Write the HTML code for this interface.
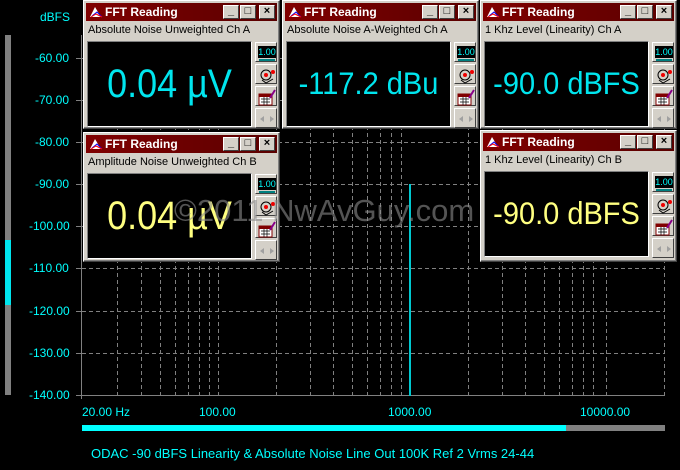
<!DOCTYPE html>
<html><head><meta charset="utf-8"><style>
*{margin:0;padding:0;box-sizing:border-box}
body{width:680px;height:470px;background:#000;position:relative;overflow:hidden;font-family:"Liberation Sans",sans-serif}
.lbl{position:absolute;color:#00ffff;font-size:12px}
.win{position:absolute;background:#d4d0c8;border:1px solid;border-color:#fff #404040 #404040 #fff;box-shadow:inset -1px -1px #808080}
.tb{position:absolute;left:2px;right:2px;top:2px;height:18px;background:linear-gradient(90deg,#800000,#5a0000);color:#fff;font-weight:bold;font-size:12px;line-height:18px;padding-left:19px}
.tb .ic{position:absolute;left:3px;top:3px}
.btn{position:absolute;top:2px;width:16px;height:14px;background:#d4d0c8;border:1px solid;border-color:#fff #404040 #404040 #fff;color:#000;font-size:11px;line-height:11px;text-align:center;font-weight:bold}
.cap{position:absolute;left:4px;top:23px;font-size:11px;color:#000}
.disp{position:absolute;left:3px;top:40px;width:165px;height:86px;background:#000;border:1px solid;border-color:#808080 #fff #fff #808080;font-size:36px;text-align:center;line-height:84px;white-space:nowrap}
.disp span{display:inline-block;transform:scaleY(1.1)}
.sb{position:absolute;left:171px;width:22px;height:20px;background:#d4d0c8;border:1px solid;border-color:#fff #404040 #404040 #fff}
.sb svg{position:absolute;left:1px;top:1px}
</style></head><body>
<svg width="680" height="470" style="position:absolute;left:0;top:0">
<rect x="5" y="35" width="6" height="360" fill="#808080"/>
<rect x="5" y="240" width="6" height="65" fill="#00e5ee"/>
<g stroke="#808080" stroke-width="1" stroke-dasharray="4,3">
<line x1="82" y1="268.5" x2="665" y2="268.5"/><line x1="82" y1="311.5" x2="665" y2="311.5"/><line x1="82" y1="353.5" x2="665" y2="353.5"/>
<line x1="82" y1="142.5" x2="665" y2="142.5"/><line x1="82" y1="184.5" x2="665" y2="184.5"/><line x1="82" y1="226.5" x2="665" y2="226.5"/>
<line x1="82" y1="58.5" x2="665" y2="58.5"/><line x1="82" y1="100.5" x2="665" y2="100.5"/>
<line x1="117.5" y1="35" x2="117.5" y2="395"/><line x1="141.5" y1="35" x2="141.5" y2="395"/><line x1="160.5" y1="35" x2="160.5" y2="395"/><line x1="175.5" y1="35" x2="175.5" y2="395"/><line x1="188.5" y1="35" x2="188.5" y2="395"/><line x1="199.5" y1="35" x2="199.5" y2="395"/><line x1="209.5" y1="35" x2="209.5" y2="395"/>
<line x1="218.5" y1="35" x2="218.5" y2="395"/><line x1="276.5" y1="35" x2="276.5" y2="395"/><line x1="310.5" y1="35" x2="310.5" y2="395"/><line x1="333.5" y1="35" x2="333.5" y2="395"/><line x1="352.5" y1="35" x2="352.5" y2="395"/><line x1="367.5" y1="35" x2="367.5" y2="395"/><line x1="380.5" y1="35" x2="380.5" y2="395"/><line x1="391.5" y1="35" x2="391.5" y2="395"/><line x1="401.5" y1="35" x2="401.5" y2="395"/>
<line x1="468.5" y1="35" x2="468.5" y2="395"/><line x1="502.5" y1="35" x2="502.5" y2="395"/><line x1="525.5" y1="35" x2="525.5" y2="395"/><line x1="544.5" y1="35" x2="544.5" y2="395"/><line x1="559.5" y1="35" x2="559.5" y2="395"/><line x1="572.5" y1="35" x2="572.5" y2="395"/><line x1="583.5" y1="35" x2="583.5" y2="395"/><line x1="593.5" y1="35" x2="593.5" y2="395"/><line x1="606.5" y1="35" x2="606.5" y2="395"/><line x1="664.5" y1="35" x2="664.5" y2="395"/>
</g>
<line x1="82" y1="395.5" x2="665" y2="395.5" stroke="#808080"/>
<line x1="81.5" y1="35" x2="81.5" y2="399" stroke="#808080"/>
<g stroke="#808080"><line x1="76" y1="58.5" x2="82" y2="58.5"/><line x1="76" y1="100.5" x2="82" y2="100.5"/><line x1="76" y1="142.5" x2="82" y2="142.5"/><line x1="76" y1="184.5" x2="82" y2="184.5"/><line x1="76" y1="226.5" x2="82" y2="226.5"/><line x1="76" y1="268.5" x2="82" y2="268.5"/><line x1="76" y1="311.5" x2="82" y2="311.5"/><line x1="76" y1="353.5" x2="82" y2="353.5"/><line x1="76" y1="395.5" x2="82" y2="395.5"/></g>
<rect x="409" y="184" width="2" height="212" fill="#00c8d0"/>
<rect x="82" y="425" width="484" height="6" fill="#00ffff"/>
<rect x="566" y="425" width="99" height="6" fill="#808080"/>
<defs>
<g id="b1"><rect x="1" y="2" width="18" height="12" fill="#000"/><text x="10" y="11" font-size="9" fill="#00ffff" text-anchor="middle" font-family="Liberation Sans">1.00</text><line x1="2" y1="16" x2="18" y2="16" stroke="#008080" stroke-width="2"/></g>
<g id="b2"><circle cx="9" cy="9" r="5" fill="none" stroke="#000"/><circle cx="9" cy="9" r="2" fill="#e00"/><circle cx="16" cy="6" r="2" fill="#e00"/><path d="M5 14 L9 17 L16 13" stroke="#000" fill="none"/></g>
<g id="b3"><rect x="2" y="6" width="13" height="11" fill="#fff" stroke="#800000"/><rect x="2" y="6" width="13" height="3" fill="#800000"/><path d="M4 11h9M4 14h9M7 9v8M10 9v8" stroke="#000" stroke-width="0.7"/><path d="M13 10 L18 2" stroke="#808" stroke-width="2"/></g>
<g id="b4"><path d="M3 9 L7 6 L7 12Z M17 9 L13 6 L13 12Z" fill="#a0a0a0"/></g>
</defs>
</svg>
<div class="lbl" style="left:40px;top:10px">dBFS</div>
<div class="lbl" style="left:35px;top:51px">-60.00</div>
<div class="lbl" style="left:35px;top:93px">-70.00</div>
<div class="lbl" style="left:35px;top:135px">-80.00</div>
<div class="lbl" style="left:35px;top:177px">-90.00</div>
<div class="lbl" style="left:29px;top:219px">-100.00</div>
<div class="lbl" style="left:29px;top:261px">-110.00</div>
<div class="lbl" style="left:29px;top:304px">-120.00</div>
<div class="lbl" style="left:29px;top:346px">-130.00</div>
<div class="lbl" style="left:29px;top:388px">-140.00</div>
<div class="lbl" style="left:82px;top:405px">20.00 Hz</div>
<div class="lbl" style="left:199px;top:405px">100.00</div>
<div class="lbl" style="left:388px;top:405px">1000.00</div>
<div class="lbl" style="left:580px;top:405px">10000.00</div>
<div class="lbl" style="left:91px;top:446px;font-size:13px">ODAC -90 dBFS Linearity &amp; Absolute Noise Line Out 100K Ref 2 Vrms 24-44</div>

<div class="win" style="left:83px;top:0;width:197px;height:129px">
<div class="tb"><svg class="ic" width="14" height="12"><path d="M1 11 L6 1 L12 11 Z" fill="#fff"/><path d="M3 10 L8 6 L13 11" stroke="#00f" fill="none"/><path d="M2 11 L7 8 L13 11" stroke="#f00" fill="none"/></svg>FFT Reading
<div class="btn" style="left:137px">_</div><div class="btn" style="left:154px">□</div><div class="btn" style="left:173px">×</div></div>
<div class="cap">Absolute Noise Unweighted Ch A</div>
<div class="disp" style="color:#00e5ee"><span>0.04 µV</span></div>
<div class="sb" style="top:41px"><svg width="20" height="18"><use href="#b1"/></svg></div><div class="sb" style="top:63px"><svg width="20" height="18"><use href="#b2"/></svg></div><div class="sb" style="top:85px"><svg width="20" height="18"><use href="#b3"/></svg></div><div class="sb" style="top:107px"><svg width="20" height="18"><use href="#b4"/></svg></div>
</div>
<div class="win" style="left:282px;top:0;width:197px;height:129px">
<div class="tb"><svg class="ic" width="14" height="12"><path d="M1 11 L6 1 L12 11 Z" fill="#fff"/><path d="M3 10 L8 6 L13 11" stroke="#00f" fill="none"/><path d="M2 11 L7 8 L13 11" stroke="#f00" fill="none"/></svg>FFT Reading
<div class="btn" style="left:137px">_</div><div class="btn" style="left:154px">□</div><div class="btn" style="left:173px">×</div></div>
<div class="cap">Absolute Noise A-Weighted Ch A</div>
<div class="disp" style="color:#00e5ee;font-size:29px"><span>-117.2 dBu</span></div>
<div class="sb" style="top:41px"><svg width="20" height="18"><use href="#b1"/></svg></div><div class="sb" style="top:63px"><svg width="20" height="18"><use href="#b2"/></svg></div><div class="sb" style="top:85px"><svg width="20" height="18"><use href="#b3"/></svg></div><div class="sb" style="top:107px"><svg width="20" height="18"><use href="#b4"/></svg></div>
</div>
<div class="win" style="left:480px;top:0;width:197px;height:129px">
<div class="tb"><svg class="ic" width="14" height="12"><path d="M1 11 L6 1 L12 11 Z" fill="#fff"/><path d="M3 10 L8 6 L13 11" stroke="#00f" fill="none"/><path d="M2 11 L7 8 L13 11" stroke="#f00" fill="none"/></svg>FFT Reading
<div class="btn" style="left:137px">_</div><div class="btn" style="left:154px">□</div><div class="btn" style="left:173px">×</div></div>
<div class="cap">1 Khz Level (Linearity) Ch A</div>
<div class="disp" style="color:#00e5ee;font-size:29px"><span>-90.0 dBFS</span></div>
<div class="sb" style="top:41px"><svg width="20" height="18"><use href="#b1"/></svg></div><div class="sb" style="top:63px"><svg width="20" height="18"><use href="#b2"/></svg></div><div class="sb" style="top:85px"><svg width="20" height="18"><use href="#b3"/></svg></div><div class="sb" style="top:107px"><svg width="20" height="18"><use href="#b4"/></svg></div>
</div>
<div class="win" style="left:83px;top:132px;width:197px;height:130px">
<div class="tb"><svg class="ic" width="14" height="12"><path d="M1 11 L6 1 L12 11 Z" fill="#fff"/><path d="M3 10 L8 6 L13 11" stroke="#00f" fill="none"/><path d="M2 11 L7 8 L13 11" stroke="#f00" fill="none"/></svg>FFT Reading
<div class="btn" style="left:137px">_</div><div class="btn" style="left:154px">□</div><div class="btn" style="left:173px">×</div></div>
<div class="cap">Amplitude Noise Unweighted Ch B</div>
<div class="disp" style="color:#ffff80"><span>0.04 µV</span></div>
<div class="sb" style="top:41px"><svg width="20" height="18"><use href="#b1"/></svg></div><div class="sb" style="top:63px"><svg width="20" height="18"><use href="#b2"/></svg></div><div class="sb" style="top:85px"><svg width="20" height="18"><use href="#b3"/></svg></div><div class="sb" style="top:107px"><svg width="20" height="18"><use href="#b4"/></svg></div>
</div>
<div class="win" style="left:480px;top:130px;width:197px;height:132px">
<div class="tb"><svg class="ic" width="14" height="12"><path d="M1 11 L6 1 L12 11 Z" fill="#fff"/><path d="M3 10 L8 6 L13 11" stroke="#00f" fill="none"/><path d="M2 11 L7 8 L13 11" stroke="#f00" fill="none"/></svg>FFT Reading
<div class="btn" style="left:137px">_</div><div class="btn" style="left:154px">□</div><div class="btn" style="left:173px">×</div></div>
<div class="cap">1 Khz Level (Linearity) Ch B</div>
<div class="disp" style="color:#ffff80;font-size:29px"><span>-90.0 dBFS</span></div>
<div class="sb" style="top:41px"><svg width="20" height="18"><use href="#b1"/></svg></div><div class="sb" style="top:63px"><svg width="20" height="18"><use href="#b2"/></svg></div><div class="sb" style="top:85px"><svg width="20" height="18"><use href="#b3"/></svg></div><div class="sb" style="top:107px"><svg width="20" height="18"><use href="#b4"/></svg></div>
</div>
<div style="position:absolute;left:174px;top:193px;font-size:31px;color:rgba(140,140,140,0.6);white-space:nowrap">©2011 NwAvGuy.com</div>
</body></html>
